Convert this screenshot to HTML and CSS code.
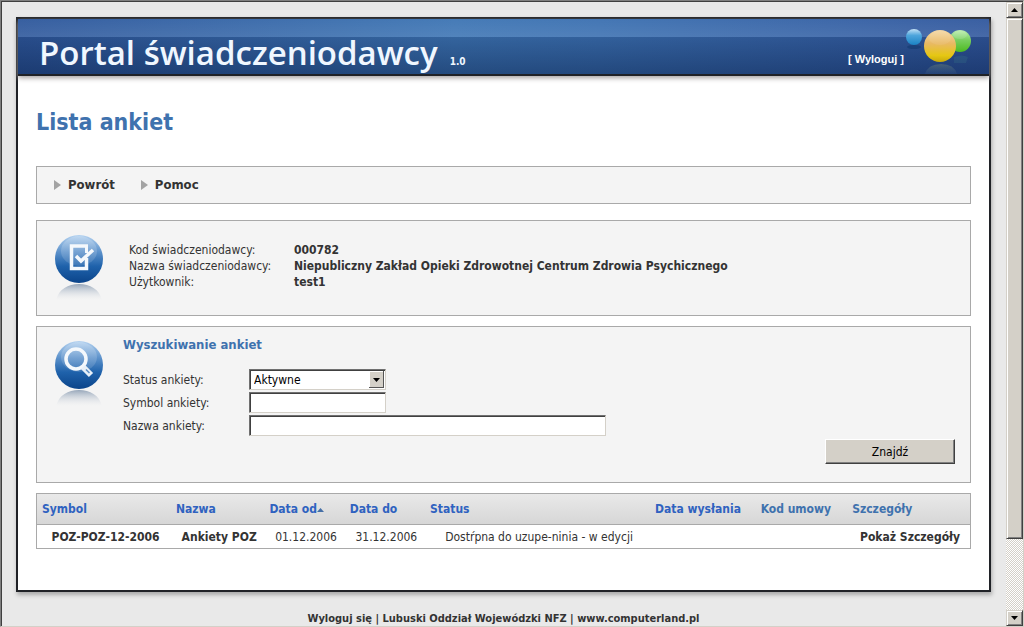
FILE: index.html
```html
<!DOCTYPE html>
<html lang="pl">
<head>
<meta charset="utf-8">
<title>Portal świadczeniodawcy</title>
<link rel="stylesheet" href="styles.css">
</head>
<body>
<div class="viewport">
  <div class="page">
    <div class="panel">
      <header class="banner">
        <div class="brand"><span class="brand-name">Portal świadczeniodawcy</span><span class="brand-version">1.0</span></div>
        <a class="logout" href="#">[ Wyloguj ]</a>
        <svg class="logo" width="72" height="55" viewBox="0 0 72 55" aria-hidden="true">
          <defs>
            <linearGradient id="ballBlue" x1="0" y1="0" x2="0" y2="1"><stop offset="0" stop-color="#c4e2f6"/><stop offset=".4" stop-color="#4ea5dc"/><stop offset="1" stop-color="#1a82c4"/></linearGradient>
            <linearGradient id="ballGreen" x1="0" y1="0" x2="0" y2="1"><stop offset="0" stop-color="#bdeeb0"/><stop offset=".45" stop-color="#79cf60"/><stop offset="1" stop-color="#4cba20"/></linearGradient>
            <linearGradient id="ballGold" x1="0" y1="0" x2="0" y2="1"><stop offset="0" stop-color="#f4d9a8"/><stop offset=".42" stop-color="#e9b964"/><stop offset=".8" stop-color="#e5c712"/><stop offset="1" stop-color="#c7a90b"/></linearGradient>
            <linearGradient id="reflection" x1="0" y1="0" x2="0" y2="1"><stop offset="0" stop-color="#8a9a70" stop-opacity=".35"/><stop offset="1" stop-color="#6a8aa0" stop-opacity=".08"/></linearGradient>
          </defs>
          <ellipse cx="10" cy="28" rx="7" ry="2" fill="#12386f" opacity=".6"/>
          <path d="M21 55q3-10 16-10t16 10z" fill="url(#reflection)"/>
          <path d="M50 38q8-3 14 0l-2 6H50z" fill="#3b7a86" opacity=".25"/>
          <circle cx="10" cy="18" r="8" fill="url(#ballBlue)"/>
          <circle cx="56" cy="22" r="11" fill="url(#ballGreen)"/>
          <circle cx="36" cy="27" r="16" fill="url(#ballGold)"/>
          <ellipse cx="36" cy="19" rx="11" ry="7" fill="#fff" opacity=".08"/>
          <ellipse cx="56" cy="16" rx="7" ry="4" fill="#fff" opacity=".12"/>
        </svg>
      </header>
      <main class="content">
        <h1 class="title">Lista ankiet</h1>
        <nav class="box menu">
          <a class="menu-link" href="#">Powrót</a>
          <a class="menu-link" href="#">Pomoc</a>
        </nav>
        <section class="box info">
          <svg class="orb" width="50" height="68" viewBox="0 0 50 68" aria-hidden="true">
            <defs>
              <linearGradient id="orbFill" x1="0" y1="0" x2="0" y2="1"><stop offset="0" stop-color="#b4d2f0"/><stop offset=".35" stop-color="#5d92cb"/><stop offset=".65" stop-color="#1f62ab"/><stop offset="1" stop-color="#0b448a"/></linearGradient>
              <linearGradient id="orbShine" x1="0" y1="0" x2="0" y2="1"><stop offset="0" stop-color="#fff" stop-opacity=".2"/><stop offset="1" stop-color="#fff" stop-opacity=".12"/></linearGradient>
              <linearGradient id="orbShade" x1="0" y1="0" x2="0" y2="1"><stop offset="0" stop-color="#7f93ab" stop-opacity=".8"/><stop offset=".4" stop-color="#a9b6c6" stop-opacity=".5"/><stop offset="1" stop-color="#dfe3e8" stop-opacity="0"/></linearGradient>
            </defs>
            <path d="M2 66C5 55 14 50 25 50s20 5 23 16z" fill="url(#orbShade)"/>
            <circle cx="25" cy="25" r="24" fill="url(#orbFill)"/>
            <ellipse cx="25" cy="17" rx="18" ry="15" fill="url(#orbShine)"/>
            <path d="M34 12H17.500V34.500H32.500V24" fill="none" stroke="#f4f8fc" stroke-width="3.500"/>
            <path d="M32.500 11V19" fill="none" stroke="#f4f8fc" stroke-width="3"/>
            <path d="M22 22l5 5L39 16" fill="none" stroke="#f4f8fc" stroke-width="3.500"/>
          </svg>
          <dl class="facts">
            <dt>Kod świadczeniodawcy:</dt><dd>000782</dd>
            <dt>Nazwa świadczeniodawcy:</dt><dd>Niepubliczny Zakład Opieki Zdrowotnej Centrum Zdrowia Psychicznego</dd>
            <dt>Użytkownik:</dt><dd>test1</dd>
          </dl>
        </section>
        <section class="box search">
          <svg class="orb" width="50" height="68" viewBox="0 0 50 68" aria-hidden="true">
            <path d="M2 66C5 55 14 50 25 50s20 5 23 16z" fill="url(#orbShade)"/>
            <circle cx="25" cy="25" r="24" fill="url(#orbFill)"/>
            <ellipse cx="25" cy="17" rx="18" ry="15" fill="url(#orbShine)"/>
            <circle cx="22" cy="19" r="10" fill="none" stroke="#f4f8fc" stroke-width="3.500"/>
            <path d="M29 27l8 8" stroke="#e8f0f8" stroke-width="6"/>
            <path d="M32 29.500l3.500 3.500" stroke="#5d8fc5" stroke-width="1.500"/>
          </svg>
          <form class="form">
            <h2 class="form-title">Wyszukiwanie ankiet</h2>
            <div class="field">
              <label for="status">Status ankiety:</label>
              <span class="select"><select id="status" class="control"><option>Aktywne</option></select><svg class="select-arrow" viewBox="0 0 15 17" aria-hidden="true"><path d="M4 7h7l-3.500 4z"/></svg></span>
            </div>
            <div class="field">
              <label for="symbol">Symbol ankiety:</label>
              <input id="symbol" class="control short" type="text">
            </div>
            <div class="field">
              <label for="name">Nazwa ankiety:</label>
              <input id="name" class="control long" type="text">
            </div>
            <button class="submit" type="button">Znajdź</button>
          </form>
        </section>
        <table class="grid">
          <colgroup><col class="c-symbol"><col class="c-name"><col class="c-date"><col class="c-date"><col class="c-status"><col class="c-sent"><col class="c-contract"><col class="c-details"></colgroup>
          <thead>
            <tr>
              <th><a href="#">Symbol</a></th>
              <th><a href="#">Nazwa</a></th>
              <th><a href="#">Data od<svg class="sort" width="7" height="4" viewBox="0 0 7 4" aria-hidden="true"><path d="M0 4h7L3.500 0z" fill="#456fa6"/></svg></a></th>
              <th><a href="#">Data do</a></th>
              <th><a href="#">Status</a></th>
              <th><a href="#">Data wysłania</a></th>
              <th>Kod umowy</th>
              <th>Szczegóły</th>
            </tr>
          </thead>
          <tbody>
            <tr>
              <td class="strong">POZ-POZ-12-2006</td>
              <td class="strong">Ankiety POZ</td>
              <td>01.12.2006</td>
              <td>31.12.2006</td>
              <td>Dostŕpna do uzupe-ninia - w edycji</td>
              <td></td>
              <td></td>
              <td class="strong"><a href="#">Pokaż Szczegóły</a></td>
            </tr>
          </tbody>
        </table>
      </main>
    </div>
    <footer class="footer"><a href="#">Wyloguj się</a> | Lubuski Oddział Wojewódzki NFZ | <a href="#">www.computerland.pl</a></footer>
  </div>
  <div class="scrollbar">
    <button class="scroll-button" type="button" aria-label="W górę"><svg width="7" height="4" viewBox="0 0 7 4"><path d="M0 4h7L3.500 0z"/></svg></button>
    <div class="thumb"></div>
    <div class="track"></div>
    <button class="scroll-button" type="button" aria-label="W dół"><svg width="7" height="4" viewBox="0 0 7 4"><path d="M0 0h7L3.500 4z"/></svg></button>
  </div>
</div>
</body>
</html>
```
FILE: styles.css
```css
* { box-sizing: border-box; }

body {
  margin: 0;
  color: #333;
  font: 12px/16px "DejaVu Sans Condensed", "DejaVu Sans", sans-serif;
}

a { color: inherit; text-decoration: none; }

.viewport {
  display: flex;
  min-height: 100vh;
  border: 1px solid #808080;
  border-right-color: #d4d0c8;
  border-bottom-color: #d4d0c8;
  background: #e9e9e9;
  box-shadow: inset 1px 1px #404040;
}

.page { flex: 1; padding: 16px 15px 0; }

.panel {
  border: 2px solid #202227;
  background: #fff;
  box-shadow: 1px 3px 4px #aaa;
}

.banner {
  display: flex;
  align-items: flex-end;
  height: 57px;
  padding-left: 21px;
  border-bottom: 2px solid #202227;
  background:
    linear-gradient(#ffffff08, #ffffff18 18px, #00133a30 18px, #00133a70),
    linear-gradient(90deg, #315a9d, #4077b5 45%, #3e72b2 60%, #345a9f);
  box-shadow: 0 2px 5px #a5a0a0;
  color: #fff;
  font-weight: bold;
}

.brand { display: flex; flex: 1; align-items: baseline; gap: 12px; color: #f0f7ff; }
.brand-name { font: 600 33px/42px "Open Sans", sans-serif; }
.brand-version { font: bold 10px/12px "DejaVu Sans Condensed", sans-serif; }
.logout { padding-bottom: 8px; font: bold 11px/14px "Liberation Sans", sans-serif; }
.logo { flex: none; margin-right: 13px; }

.content { padding: 33px 18px 41px; }

.title {
  margin: 0 0 31px;
  color: #3f72ae;
  font: bold 23px/26px "DejaVu Sans Condensed", sans-serif;
}

.box { border: 1px solid #a9a9a9; background: #f4f4f4; }

.menu { display: flex; gap: 26px; margin-bottom: 16px; padding: 10px 17px; font-size: 13px; font-weight: bold; }
.menu-link { display: flex; align-items: center; gap: 7px; }
.menu-link::before {
  content: "";
  border: 5px solid transparent;
  border-right-width: 0;
  border-left: 7px solid #a3a3a3;
}

.info, .search { display: flex; padding: 13px 15px 13px 17px; }
.info { gap: 25px; margin-bottom: 10px; }
.search { gap: 19px; margin-bottom: 10px; padding-bottom: 18px; }
.orb { flex: none; }

.facts {
  display: grid;
  grid-template-columns: 165px 1fr;
  align-content: start;
  margin: 8px 0 0;
}
.facts dt, .facts dd { margin: 0; }
.facts dd { font-weight: bold; }

.form { display: flex; flex: 1; flex-direction: column; gap: 2px; }
.form-title { margin: -3px 0 14px; color: #3f72ae; font-size: 13px; line-height: 16px; }
.field { display: grid; grid-template-columns: 126px 1fr; align-items: center; }

.control {
  display: block;
  width: 100%;
  height: 21px;
  padding: 0 4px;
  border: 1px solid;
  border-color: #707070 #d4d0c8 #d4d0c8 #707070;
  border-radius: 0;
  background: #fff;
  box-shadow: inset 1px 1px #404040;
  color: #000;
  font: inherit;
  appearance: none;
}
.select { position: relative; }
.select, .short { width: 137px; }
.long { width: 357px; max-width: 100%; }
.select-arrow {
  position: absolute;
  top: 2px;
  right: 2px;
  width: 15px;
  height: 17px;
  background: #d4d0c8;
  box-shadow: inset -1px -1px #555, inset 1px 1px #fff;
  pointer-events: none;
}

.submit {
  align-self: flex-end;
  width: 130px;
  height: 25px;
  margin: 1px 0 0;
  border: 1px solid;
  border-color: #fff #404040 #404040 #fff;
  background: #d4d0c8;
  box-shadow: inset -1px -1px #808080;
  color: #000;
  font: inherit;
}

.grid {
  width: 100%;
  border: 1px solid #a9a9a9;
  border-collapse: collapse;
  table-layout: fixed;
}
.grid thead { background: linear-gradient(#e9e9e9, #d6d6d6); }
.grid th {
  height: 31px;
  padding: 0 5px;
  border-bottom: 1px solid #a9a9a9;
  color: #3f72ae;
  text-align: left;
  white-space: nowrap;
}
.grid th a { color: #2f62c0; }
.grid td { height: 24px; padding: 0 0 0 3px; text-align: center; white-space: nowrap; }
.grid .strong { font-weight: bold; }
.sort { vertical-align: middle; }
.c-symbol { width: 14.4%; }
.c-name { width: 10%; }
.c-date { width: 8.6%; }
.c-status { width: 24.1%; }
.c-sent { width: 11.3%; }
.c-contract { width: 9.8%; }
.c-details { width: 13.2%; }

.footer {
  padding-top: 20px;
  font: bold 11px/14px "DejaVu Sans Condensed", sans-serif;
  text-align: center;
}

.scrollbar { display: flex; flex: none; flex-direction: column; width: 17px; margin-top: 1px; }
.scroll-button, .thumb {
  border: 1px solid;
  border-color: #d4d0c8 #404040 #404040 #d4d0c8;
  background: #d4d0c8;
  box-shadow: inset 1px 1px #fff, inset -1px -1px #808080;
}
.scroll-button { display: grid; place-items: center; flex: none; height: 16px; padding: 0; }
.thumb { flex: 521; }
.track {
  flex: 71;
  background: repeating-conic-gradient(#fff 0 25%, #d4d0c8 0 50%) 0 0 / 2px 2px;
}
```
